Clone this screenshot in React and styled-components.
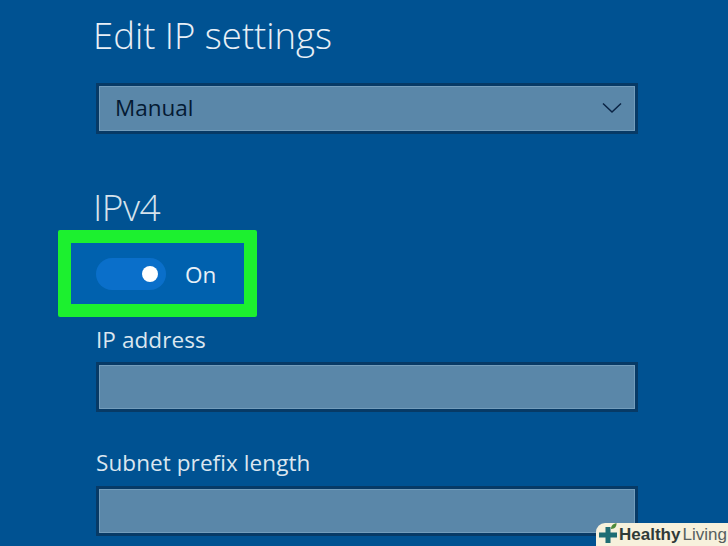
import React from "react";
import styled, { createGlobalStyle } from "styled-components";

const Global = createGlobalStyle`
  html, body { margin: 0; padding: 0; background: #005292; }
  #root { width: 728px; height: 546px; overflow: hidden; }
`;

const Page = styled.div`
  position: relative;
  width: 728px;
  height: 546px;
  overflow: hidden;
  box-sizing: border-box;
  padding: 12px 90px 0 58px;
  background: #005292;
  font-family: "Open Sans", "Liberation Sans", sans-serif;
  color: #e6eef5;
  display: flex;
  flex-direction: column;
`;

const Title = styled.h1`
  margin: 0 0 0 35px;
  font-weight: 300;
  font-size: 36.5px;
  line-height: 46px;
  color: #e8eff6;
  white-space: nowrap;
`;

const Field = styled.div`
  box-sizing: border-box;
  margin-left: 38px;
  width: 542px;
  height: ${(p) => p.$h || 50}px;
  flex: none;
  background: #5a87a9;
  border: 3px solid #073a66;
  box-shadow: inset 0 0 0 1px #739dbc;
  display: flex;
  align-items: center;
  justify-content: space-between;
  padding: 0 13px 1px 16px;
`;

const SelectField = styled(Field)`
  margin-top: 25px;
  color: #041a33;
  font-size: 22.5px;
  line-height: 30px;
`;

const SelectText = styled.span`
  margin-bottom: 1px;
`;

const Section = styled.h2`
  margin: 50px 0 0 35px;
  font-weight: 300;
  font-size: 37px;
  line-height: 46px;
  letter-spacing: -0.5px;
  color: #d5e2ec;
`;

const Highlight = styled.div`
  box-sizing: border-box;
  width: 199px;
  height: 87px;
  flex: none;
  border: 13px solid #1cf02f;
  border-radius: 2px;
  background: #0061ae;
  display: flex;
  align-items: center;
  padding: 1px 0 0 25px;
  gap: 19px;
`;

const Track = styled.div`
  box-sizing: border-box;
  width: 70px;
  height: 32px;
  border-radius: 16px;
  background: #0a6fca;
  display: flex;
  align-items: center;
  justify-content: flex-end;
  padding-right: 8px;
`;

const Knob = styled.div`
  width: 16px;
  height: 16px;
  border-radius: 50%;
  background: #fff;
`;

const ToggleLabel = styled.span`
  font-size: 22.5px;
  color: #e8f0f7;
  line-height: 30px;
  margin-top: 2px;
`;

const Label = styled.div`
  margin: ${(p) => p.$top}px 0 ${(p) => p.$bottom}px 38px;
  font-size: 22.5px;
  line-height: 30px;
  letter-spacing: 0.08px;
  color: #dbe6ef;
  white-space: nowrap;
`;

const Badge = styled.div`
  position: absolute;
  right: 0;
  bottom: 0;
  width: 132px;
  height: 23px;
  background: #f7f1dc;
  border-top-left-radius: 9px;
  display: flex;
  align-items: center;
  padding-left: 3px;
  box-sizing: border-box;
  font-family: "Liberation Sans", Arial, sans-serif;
  font-size: 17px;
  white-space: nowrap;
`;

const Strong = styled.span`
  font-weight: 700;
  color: #2f3a38;
  margin-left: 2px;
`;

const Light = styled.span`
  color: #56605f;
  margin-left: 2px;
`;

const Chevron = () => (
  <svg width="20" height="12" viewBox="0 0 20 12" fill="none">
    <path d="M1 1.5 L10 10 L19 1.5" stroke="#0a2344" strokeWidth="1.5" />
  </svg>
);

const Logo = () => (
  <svg width="18" height="23" viewBox="0 0 18 23" style={{ flex: "none" }}>
    <path d="M0 9.5h6.5V4h5v5.5H18v5h-6.5V20h-5v-5.5H0z" fill="#1f6d74" />
    <path d="M12 6c0-3 1.5-5 5.5-6 .3 3-1.5 6-5.5 6z" fill="#4d8a3a" />
  </svg>
);

export default function App() {
  return (
    <Page>
      <Global />
      <Title>Edit IP settings</Title>
      <SelectField $h={51}>
        <SelectText>Manual</SelectText>
        <Chevron />
      </SelectField>
      <Section>IPv4</Section>
      <Highlight>
        <Track>
          <Knob />
        </Track>
        <ToggleLabel>On</ToggleLabel>
      </Highlight>
      <Label $top={8} $bottom={7}>IP address</Label>
      <Field />
      <Label $top={36} $bottom={8}>Subnet prefix length</Label>
      <Field />
      <Badge>
        <Logo />
        <Strong>Healthy</Strong>
        <Light>Living</Light>
      </Badge>
    </Page>
  );
}
